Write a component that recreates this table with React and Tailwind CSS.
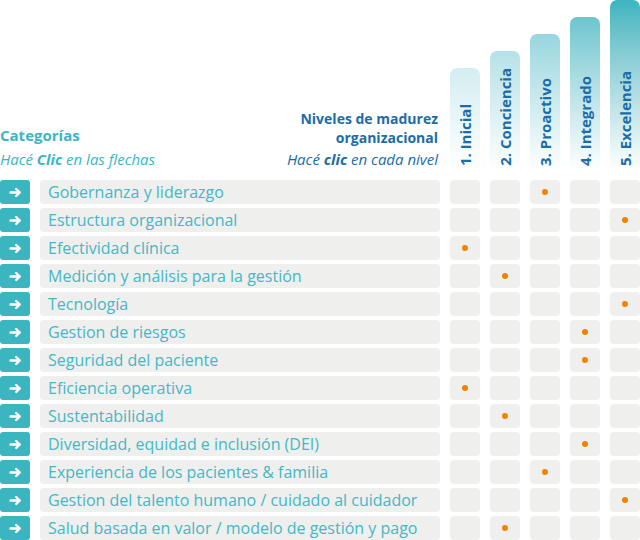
import React from 'react';

const levels = [
  { name: '1. Inicial', h: 'h-[102px]', bg: 'from-[#d3eef2]' },
  { name: '2. Conciencia', h: 'h-[119px]', bg: 'from-[#b5e1e7]' },
  { name: '3. Proactivo', h: 'h-[136px]', bg: 'from-[#97d6de]' },
  { name: '4. Integrado', h: 'h-[153px]', bg: 'from-[#6cc5cf]' },
  { name: '5. Excelencia', h: 'h-[170px]', bg: 'from-[#3bb4bf]' },
];

const rows = [
  ['Gobernanza y liderazgo', 3],
  ['Estructura organizacional', 5],
  ['Efectividad clínica', 1],
  ['Medición y análisis para la gestión', 2],
  ['Tecnología', 5],
  ['Gestion de riesgos', 4],
  ['Seguridad del paciente', 4],
  ['Eficiencia operativa', 1],
  ['Sustentabilidad', 2],
  ['Diversidad, equidad e inclusión (DEI)', 4],
  ['Experiencia de los pacientes & familia', 3],
  ['Gestion del talento humano / cuidado al cuidador', 5],
  ['Salud basada en valor / modelo de gestión y pago', 2],
];

const Arrow = () => (
  <svg width="13" height="11" viewBox="0 0 13 11" fill="none" stroke="white" strokeWidth="2.4" strokeLinecap="round" strokeLinejoin="round">
    <path d="M1.5 5.5H10.5" />
    <path d="M7.2 2L10.7 5.5L7.2 9" />
  </svg>
);

export default function App() {
  return (
    <div className="w-[640px] h-[540px] bg-white overflow-hidden font-['Open_Sans',sans-serif]">
      <div className="flex h-[170px] mb-[10px]">
        <div className="w-[440px] flex items-end justify-between pb-[2px]">
          <div className="text-[#3cb6c2]">
            <div className="text-[15px] font-bold leading-[18px] mb-[6px]">Categorías</div>
            <div className="text-[15px] italic leading-[18px]">Hacé <b>Clic</b> en las flechas</div>
          </div>
          <div className="text-[#1c6ca8] text-right pr-[2px]">
            <div className="text-[14px] font-bold leading-[19px]">Niveles de madurez</div>
            <div className="text-[14px] font-bold leading-[19px] mb-[3px]">organizacional</div>
            <div className="text-[15px] italic leading-[18px]">Hacé <b>clic</b> en cada nivel</div>
          </div>
        </div>
        <div className="flex items-end gap-[10px] ml-[10px]">
          {levels.map((l) => (
            <div key={l.name} className={`w-[30px] ${l.h} rounded-t-[7px] bg-linear-to-b ${l.bg} to-white flex flex-col items-center justify-end pb-[4px]`}>
              <span className="[writing-mode:vertical-rl] rotate-180 text-[15px] font-bold text-[#1c6ca8] leading-none whitespace-nowrap">{l.name}</span>
            </div>
          ))}
        </div>
      </div>
      <div className="flex flex-col gap-[4px]">
        {rows.map(([label, lvl]) => (
          <div key={label} className="flex h-[24px]">
            <button className="w-[30px] h-[24px] rounded-[3px] bg-[#3bb5bf] flex items-center justify-center">
              <Arrow />
            </button>
            <div className="w-[400px] ml-[10px] rounded-[4px] bg-[#efefee] pl-[8px] flex items-center text-[16px] text-[#45b8c4] whitespace-nowrap">
              {label}
            </div>
            <div className="flex gap-[10px] ml-[10px]">
              {[1, 2, 3, 4, 5].map((n) => (
                <div key={n} className="w-[30px] h-[24px] rounded-[4px] bg-[#efefee] flex items-center justify-center">
                  {n === lvl && <span className="w-[6px] h-[6px] rounded-full bg-[#f08300]" />}
                </div>
              ))}
            </div>
          </div>
        ))}
      </div>
    </div>
  );
}
